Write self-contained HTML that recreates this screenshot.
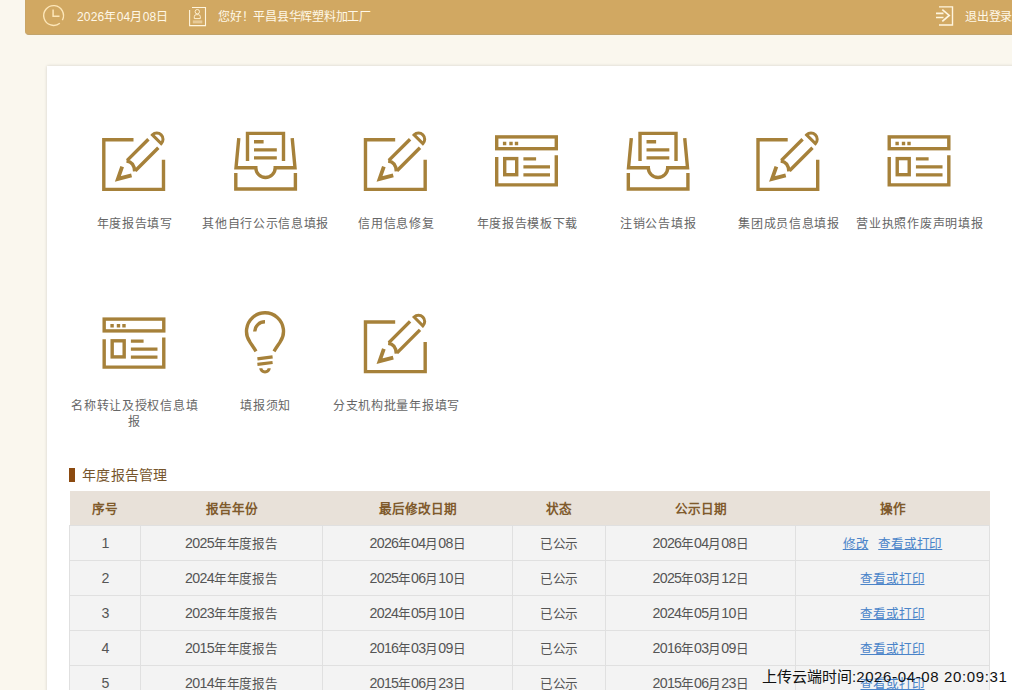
<!DOCTYPE html>
<html lang="zh-CN">
<head>
<meta charset="utf-8">
<style>
html,body{margin:0;padding:0;}
body{width:1012px;height:690px;overflow:hidden;position:relative;background:#faf7ee;font-family:"Liberation Sans",sans-serif;}
.hdr{position:absolute;left:25px;top:0;width:1099px;height:34px;background:#d1a862;border-bottom:1px solid #c2a46c;border-left:1px solid #c9a566;border-bottom-left-radius:4px;}
.ht{position:absolute;top:1px;height:33px;line-height:33px;font-size:12px;letter-spacing:-0.25px;color:#fff8e8;white-space:nowrap;}
.card{position:absolute;left:47px;top:66px;width:1100px;height:800px;background:#fff;box-shadow:0 0 3px rgba(0,0,0,0.16);}
.lbl{position:absolute;text-align:center;white-space:nowrap;font-size:12px;letter-spacing:0.7px;line-height:16px;color:#666;}
svg.ic{position:absolute;overflow:visible;}
.ic *{fill:none;stroke:#a6813a;stroke-width:3.4;}
.sec{position:absolute;left:69px;top:468px;width:6px;height:14px;background:#8b4a10;}
.sect{position:absolute;left:82px;top:466px;font-size:14px;letter-spacing:0.3px;line-height:18px;color:#76552c;}
table{position:absolute;left:69px;top:491px;border-collapse:collapse;table-layout:fixed;font-size:12.6px;}
th{height:33px;background:#e8e1d9;color:#7f5a2c;font-weight:bold;padding:0 0 1px 0;border:0;font-size:12.6px;}
td{height:32px;letter-spacing:-0.2px;background:#f3f3f3;color:#555;text-align:center;padding:0 0 2px 0;border:1px solid #e0e0e0;}
td a{color:#4a84c9;text-decoration:underline;}
td .d{font-size:14.2px;letter-spacing:-0.7px;position:relative;top:0.8px;}
.stamp{position:absolute;left:762px;top:667.5px;font-size:15px;line-height:18px;color:#111;white-space:nowrap;}
.stamp .d{font-size:15px;letter-spacing:0.63px;}
</style>
</head>
<body>
<div class="hdr"></div>
<svg class="ic" style="left:0;top:0" width="1012" height="35">
  <path d="M59.83,23.19 A9.9,9.9 0 1 1 62.34,20.15" style="stroke:#fde6b8;stroke-width:1.4"/>
  <path d="M53.1,9.6 V16.3 H59.5" style="stroke:#fde6b8;stroke-width:1.5"/>
  <path d="M192,7.5 H205.5 V25.6 H189.6 V10" style="stroke:#fff5de;stroke-width:1.1"/>
  <circle cx="197.3" cy="11.7" r="2.2" style="stroke:#fff0d0;stroke-width:1"/>
  <path d="M194.3,18.6 V16.6 Q194.3,14.7 196.2,14.7 H198.4 Q200.3,14.7 200.3,16.6 V18.6 Z" style="stroke:#fff0d0;stroke-width:1"/>
  <rect x="192.8" y="20.4" width="9.5" height="3" style="fill:rgba(255,238,205,0.5);stroke:none"/>
  <path d="M939,6.9 H952.5 V25 H939" style="stroke:#fff5de;stroke-width:1.4"/>
  <path d="M936,13.3 H943.5 M936,17.5 H943.5 M942.3,9.6 L949.2,15.4 L942.3,21.4" style="stroke:#fff5de;stroke-width:1.7"/>
</svg>
<div class="ht" style="left:77px;font-size:12px;letter-spacing:0.2px">2026年04月08日</div>
<div class="ht" style="left:218px">您好！平昌县华辉塑料加工厂</div>
<div class="ht" style="left:965px">退出登录</div>
<div class="card"></div>
<svg class="ic" style="left:0;top:0" width="1012" height="690"><path d="M133.50,139.80 H103.80 V189.40 H163.50 V159.80"/><g transform="translate(148.40,148.40) rotate(-45)"><path d="M-23.5,-6.5 H6.5 M-25,6.5 H7.5"/><path d="M-24.5,-6.5 Q-19.5,-0.5 -26,6.5"/><path d="M12.4,-6.7 A6.2,6.2 0 0 1 12.4,5.7 Z" style="stroke-width:3"/><path d="M-31.5,-5.6 L-43.2,0 L-31,7.2" style="stroke-linejoin:miter;stroke-width:3.8"/></g><g transform="translate(0.00,0.00)"><path d="M247.5,161 V133.4 H283.5 V161"/><path d="M254,141.8 H263.6 M254,149.9 H276.8 M254,157.9 H276.8"/><path d="M238.8,138.2 L236,167.7 H255.8 A9.7,9.8 0 0 0 275.2,167.7 H295 L292.2,138.2"/><path d="M235.8,173 V189 H295.4 V173"/></g><path d="M395.18,139.80 H365.48 V189.40 H425.18 V159.80"/><g transform="translate(410.08,148.40) rotate(-45)"><path d="M-23.5,-6.5 H6.5 M-25,6.5 H7.5"/><path d="M-24.5,-6.5 Q-19.5,-0.5 -26,6.5"/><path d="M12.4,-6.7 A6.2,6.2 0 0 1 12.4,5.7 Z" style="stroke-width:3"/><path d="M-31.5,-5.6 L-43.2,0 L-31,7.2" style="stroke-linejoin:miter;stroke-width:3.8"/></g><g transform="translate(0.00,0.00)"><rect x="496.7" y="136.9" width="59.6" height="11.8"/><path d="M502.9,143.5 H506.3 M509.3,143.5 H512.7 M514.8,143.5 H518.2" style="stroke-width:3.4"/><path d="M496.7,157 V184.9 H556.3 V155.2"/><rect x="504.7" y="158.6" width="12" height="16.1"/><path d="M523.4,158.9 H536.1 M523.4,166.9 H550 M523.4,174.9 H550"/></g><g transform="translate(392.52,0.00)"><path d="M247.5,161 V133.4 H283.5 V161"/><path d="M254,141.8 H263.6 M254,149.9 H276.8 M254,157.9 H276.8"/><path d="M238.8,138.2 L236,167.7 H255.8 A9.7,9.8 0 0 0 275.2,167.7 H295 L292.2,138.2"/><path d="M235.8,173 V189 H295.4 V173"/></g><path d="M787.70,139.80 H758.00 V189.40 H817.70 V159.80"/><g transform="translate(802.60,148.40) rotate(-45)"><path d="M-23.5,-6.5 H6.5 M-25,6.5 H7.5"/><path d="M-24.5,-6.5 Q-19.5,-0.5 -26,6.5"/><path d="M12.4,-6.7 A6.2,6.2 0 0 1 12.4,5.7 Z" style="stroke-width:3"/><path d="M-31.5,-5.6 L-43.2,0 L-31,7.2" style="stroke-linejoin:miter;stroke-width:3.8"/></g><g transform="translate(392.52,0.00)"><rect x="496.7" y="136.9" width="59.6" height="11.8"/><path d="M502.9,143.5 H506.3 M509.3,143.5 H512.7 M514.8,143.5 H518.2" style="stroke-width:3.4"/><path d="M496.7,157 V184.9 H556.3 V155.2"/><rect x="504.7" y="158.6" width="12" height="16.1"/><path d="M523.4,158.9 H536.1 M523.4,166.9 H550 M523.4,174.9 H550"/></g><g transform="translate(-392.52,182.20)"><rect x="496.7" y="136.9" width="59.6" height="11.8"/><path d="M502.9,143.5 H506.3 M509.3,143.5 H512.7 M514.8,143.5 H518.2" style="stroke-width:3.4"/><path d="M496.7,157 V184.9 H556.3 V155.2"/><rect x="504.7" y="158.6" width="12" height="16.1"/><path d="M523.4,158.9 H536.1 M523.4,166.9 H550 M523.4,174.9 H550"/></g><g transform="translate(0.00,0.00)"><path d="M256,351.3 C254,348 251.5,344.5 249.8,341.8 A18.5,18.5 0 1 1 280.2,341.8 C278.5,344.5 276,348 274,351.3"/><path d="M254.7,331.5 A10.3,10 0 0 1 265,321.8"/><path d="M257.4,358.9 L272.6,356.8 M257.4,364.4 L272.6,362.5" style="stroke-width:3.2"/><path d="M260.8,368.3 A4.2,3.7 0 0 0 269.2,368.3" style="stroke-width:3.1"/></g><path d="M395.18,322.00 H365.48 V371.60 H425.18 V342.00"/><g transform="translate(410.08,330.60) rotate(-45)"><path d="M-23.5,-6.5 H6.5 M-25,6.5 H7.5"/><path d="M-24.5,-6.5 Q-19.5,-0.5 -26,6.5"/><path d="M12.4,-6.7 A6.2,6.2 0 0 1 12.4,5.7 Z" style="stroke-width:3"/><path d="M-31.5,-5.6 L-43.2,0 L-31,7.2" style="stroke-linejoin:miter;stroke-width:3.8"/></g></svg>
<div class="lbl" style="left:59.80px;top:215.70px;width:150px">年度报告填写</div>
<div class="lbl" style="left:190.64px;top:215.70px;width:150px">其他自行公示信息填报</div>
<div class="lbl" style="left:321.48px;top:215.70px;width:150px">信用信息修复</div>
<div class="lbl" style="left:452.32px;top:215.70px;width:150px">年度报告模板下载</div>
<div class="lbl" style="left:583.16px;top:215.70px;width:150px">注销公告填报</div>
<div class="lbl" style="left:714.00px;top:215.70px;width:150px">集团成员信息填报</div>
<div class="lbl" style="left:844.84px;top:215.70px;width:150px">营业执照作废声明填报</div>
<div class="lbl" style="left:59.80px;top:397.90px;width:150px">名称转让及授权信息填<br>报</div>
<div class="lbl" style="left:190.64px;top:397.90px;width:150px">填报须知</div>
<div class="lbl" style="left:321.48px;top:397.90px;width:150px">分支机构批量年报填写</div>
<div class="sec"></div>
<div class="sect">年度报告管理</div>
<table>
<colgroup><col style="width:71px"><col style="width:182px"><col style="width:190px"><col style="width:93px"><col style="width:190px"><col style="width:194px"></colgroup>
<tr><th>序号</th><th>报告年份</th><th>最后修改日期</th><th>状态</th><th>公示日期</th><th>操作</th></tr>
<tr><td><span class="d">1</span></td><td><span class="d">2025</span>年年度报告</td><td><span class="d">2026</span>年<span class="d">04</span>月<span class="d">08</span>日</td><td>已公示</td><td><span class="d">2026</span>年<span class="d">04</span>月<span class="d">08</span>日</td><td><a>修改</a>&nbsp;&nbsp;&nbsp;<a>查看或打印</a></td></tr>
<tr><td><span class="d">2</span></td><td><span class="d">2024</span>年年度报告</td><td><span class="d">2025</span>年<span class="d">06</span>月<span class="d">10</span>日</td><td>已公示</td><td><span class="d">2025</span>年<span class="d">03</span>月<span class="d">12</span>日</td><td><a>查看或打印</a></td></tr>
<tr><td><span class="d">3</span></td><td><span class="d">2023</span>年年度报告</td><td><span class="d">2024</span>年<span class="d">05</span>月<span class="d">10</span>日</td><td>已公示</td><td><span class="d">2024</span>年<span class="d">05</span>月<span class="d">10</span>日</td><td><a>查看或打印</a></td></tr>
<tr><td><span class="d">4</span></td><td><span class="d">2015</span>年年度报告</td><td><span class="d">2016</span>年<span class="d">03</span>月<span class="d">09</span>日</td><td>已公示</td><td><span class="d">2016</span>年<span class="d">03</span>月<span class="d">09</span>日</td><td><a>查看或打印</a></td></tr>
<tr><td><span class="d">5</span></td><td><span class="d">2014</span>年年度报告</td><td><span class="d">2015</span>年<span class="d">06</span>月<span class="d">23</span>日</td><td>已公示</td><td><span class="d">2015</span>年<span class="d">06</span>月<span class="d">23</span>日</td><td><a>查看或打印</a></td></tr>
</table>
<div class="stamp">上传云端时间:<span class="d">2026-04-08 20:09:31</span></div>
</body>
</html>
